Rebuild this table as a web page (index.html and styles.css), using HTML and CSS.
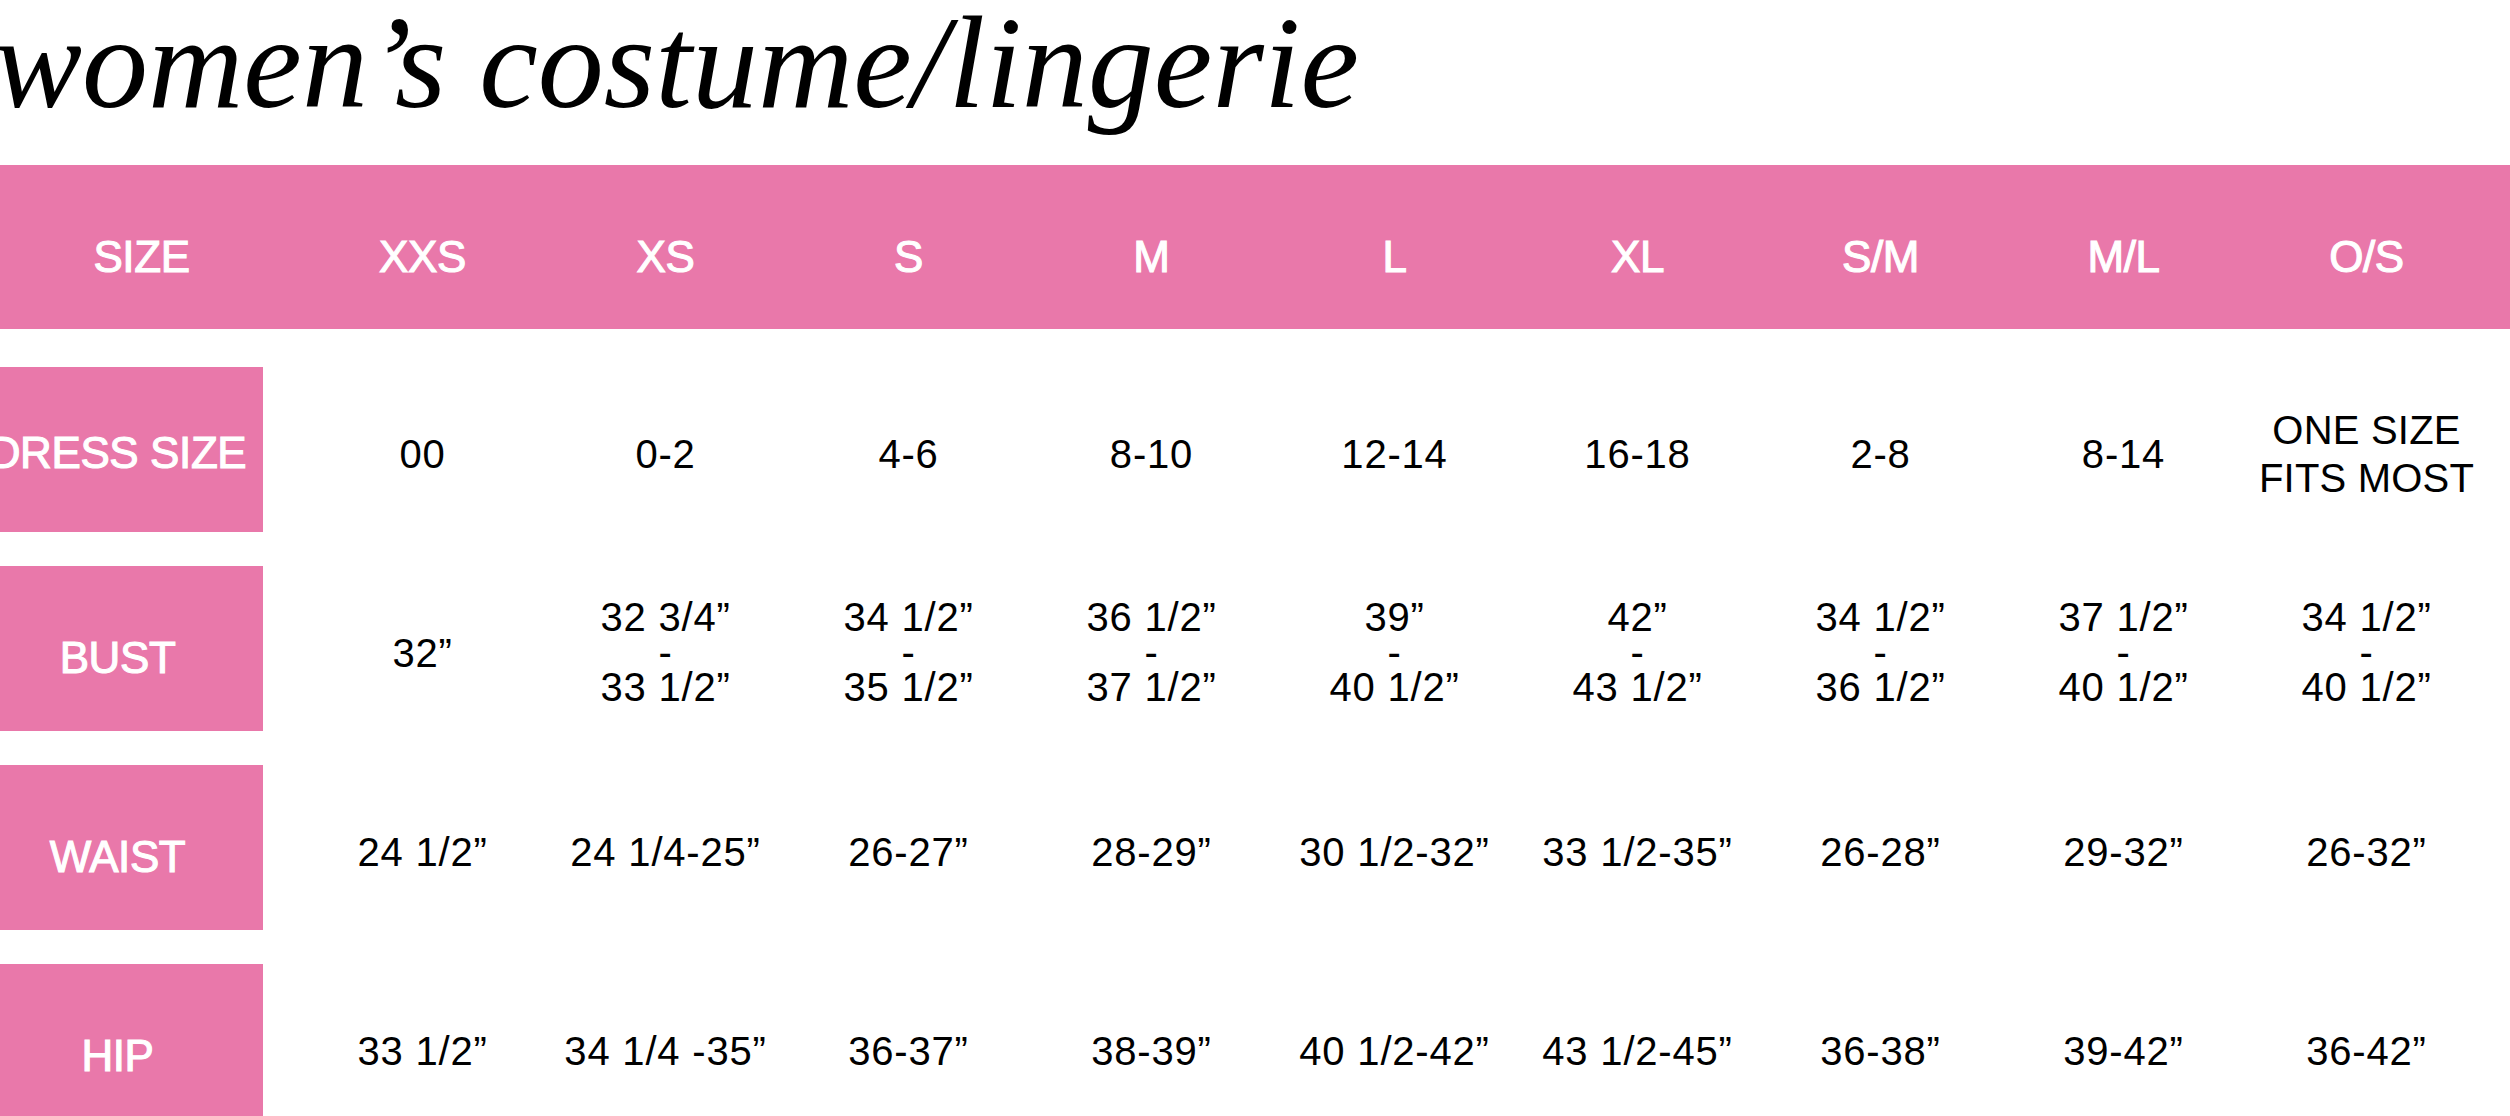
FILE: index.html
```html
<!DOCTYPE html>
<html lang="en">
<head>
<meta charset="utf-8">
<title>women’s costume/lingerie size chart</title>
<link rel="stylesheet" href="styles.css">
</head>
<body>
<h1 class="title">women’s costume/lingerie</h1>
<div class="chart">
  <div class="head">
    <div class="hc first">SIZE</div>
    <div class="hc">XXS</div>
    <div class="hc">XS</div>
    <div class="hc">S</div>
    <div class="hc">M</div>
    <div class="hc">L</div>
    <div class="hc">XL</div>
    <div class="hc">S/M</div>
    <div class="hc">M/L</div>
    <div class="hc">O/S</div>
  </div>
  <div class="rows">
    <div class="row">
      <div class="lbl lbl-dress">DRESS SIZE</div>
      <div class="val">00</div>
      <div class="val">0-2</div>
      <div class="val">4-6</div>
      <div class="val">8-10</div>
      <div class="val">12-14</div>
      <div class="val">16-18</div>
      <div class="val">2-8</div>
      <div class="val">8-14</div>
      <div class="val two">ONE SIZE<br>FITS MOST</div>
    </div>
    <div class="row">
      <div class="lbl">BUST</div>
      <div class="val">32”</div>
      <div class="val stack">32 3/4”<br>-<br>33 1/2”</div>
      <div class="val stack">34 1/2”<br>-<br>35 1/2”</div>
      <div class="val stack">36 1/2”<br>-<br>37 1/2”</div>
      <div class="val stack">39”<br>-<br>40 1/2”</div>
      <div class="val stack">42”<br>-<br>43 1/2”</div>
      <div class="val stack">34 1/2”<br>-<br>36 1/2”</div>
      <div class="val stack">37 1/2”<br>-<br>40 1/2”</div>
      <div class="val stack">34 1/2”<br>-<br>40 1/2”</div>
    </div>
    <div class="row">
      <div class="lbl">WAIST</div>
      <div class="val">24 1/2”</div>
      <div class="val">24 1/4-25”</div>
      <div class="val">26-27”</div>
      <div class="val">28-29”</div>
      <div class="val">30 1/2-32”</div>
      <div class="val">33 1/2-35”</div>
      <div class="val">26-28”</div>
      <div class="val">29-32”</div>
      <div class="val">26-32”</div>
    </div>
    <div class="row">
      <div class="lbl">HIP</div>
      <div class="val">33 1/2”</div>
      <div class="val">34 1/4 -35”</div>
      <div class="val">36-37”</div>
      <div class="val">38-39”</div>
      <div class="val">40 1/2-42”</div>
      <div class="val">43 1/2-45”</div>
      <div class="val">36-38”</div>
      <div class="val">39-42”</div>
      <div class="val">36-42”</div>
    </div>
  </div>
</div>
</body>
</html>
```
FILE: styles.css
```css
html, body {
  margin: 0;
  padding: 0;
  background: #ffffff;
}

body {
  width: 2510px;
  height: 1116px;
  overflow: hidden;
  font-family: "Liberation Sans", Arial, Helvetica, sans-serif;
  color: #000;
}

.title {
  margin: 0 0 0 -6px;
  height: 165px;
  font-family: "Liberation Serif", "Times New Roman", serif;
  font-style: italic;
  font-weight: 400;
  font-size: 132px;
  line-height: 125px;
  white-space: nowrap;
  color: #000;
}

.head,
.row {
  display: grid;
  grid-template-columns: 301px repeat(9, 243px);
}

.head {
  height: 164px;
  box-sizing: border-box;
  padding-top: 20px;
  align-items: center;
  background: #e978aa;
  color: #fff;
  font-size: 44px;
  letter-spacing: -0.4px;
  -webkit-text-stroke: 1.1px #fff;
}

.hc {
  text-align: center;
  line-height: 44px;
  white-space: nowrap;
}

.hc.first {
  padding-right: 18px;
}

.rows {
  display: flex;
  flex-direction: column;
  gap: 34px;
  margin-top: 38px;
}

.row {
  height: 165px;
}

.lbl {
  width: 263px;
  height: 165px;
  box-sizing: border-box;
  padding: 18px 28px 0 0;
  display: flex;
  align-items: center;
  justify-content: center;
  overflow: hidden;
  white-space: nowrap;
  background: #e978aa;
  color: #fff;
  font-size: 44px;
  line-height: 44px;
  letter-spacing: -0.4px;
  -webkit-text-stroke: 1.1px #fff;
}

.lbl-dress {
  padding-top: 6px;
}

.val {
  height: 165px;
  box-sizing: border-box;
  padding-top: 8px;
  display: flex;
  align-items: center;
  justify-content: center;
  text-align: center;
  white-space: nowrap;
  font-size: 40px;
  line-height: 40px;
  letter-spacing: 0.8px;
  color: #000;
}

.val.stack {
  line-height: 35px;
}

.val.two {
  line-height: 48px;
  letter-spacing: 0.2px;
}
```
